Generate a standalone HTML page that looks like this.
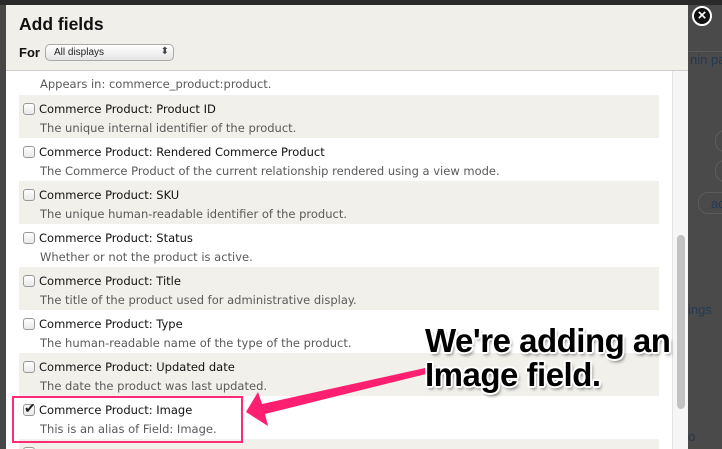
<!DOCTYPE html>
<html><head><style>
*{margin:0;padding:0;box-sizing:border-box}
body{width:722px;height:449px;overflow:hidden;background:#474747;font-family:"Liberation Sans",sans-serif;position:relative}
.top{position:absolute;left:0;top:0;width:722px;height:5px;background:#2a2a2a}
.right{position:absolute;left:688px;top:5px;width:34px;height:444px;background:#4a4a4a;color:#1a3850;font-size:13px;overflow:hidden;white-space:nowrap}
.dlg{position:absolute;left:6px;top:5px;width:682px;height:444px;background:#fff;overflow:hidden}
.hdr{position:absolute;left:0;top:0;width:682px;height:66px;background:#f0efea;border-bottom:1px solid #ccc}
.hdr h1{position:absolute;left:13px;top:9px;font-size:17.5px;font-weight:bold;color:#111}
.hdr .for{position:absolute;left:13px;top:40px;font-size:13px;font-weight:bold;color:#111}
.sel{position:absolute;left:39px;top:39px;width:129px;height:17px;border:1px solid #aaa;border-radius:5px;background:linear-gradient(#fff,#e4e4e4);font-size:10px;padding:2px 0 0 8px;color:#222}
.sel:after{content:"⬍";position:absolute;right:4px;top:1px;font-size:10px;color:#444}
.row{position:absolute;left:13px;width:640px;height:43px}
.g{background:#f1f0eb}
.t{position:absolute;left:20px;top:7px;font-family:"DejaVu Sans",sans-serif;font-size:11.5px;color:#111;white-space:nowrap}
.d{position:absolute;left:21px;top:26px;font-family:"DejaVu Sans",sans-serif;font-size:11.5px;color:#5a5a5a;white-space:nowrap}
.cb{position:absolute;left:4px;top:8px;width:12px;height:12px;border:1px solid #999;border-radius:3px;background:linear-gradient(#fff,#e8e8e8)}
.sb{position:absolute;left:666px;top:66px;width:16px;height:378px;background:#f6f6f6;border-left:1px solid #e3e3e3}
.th{position:absolute;left:4px;top:164px;width:8px;height:174px;background:#c2c2c2;border-radius:4px}
.close{position:absolute;left:692px;top:6px;width:20px;height:20px;border-radius:50%;background:#111;border:2px solid #fff;color:#fff;font-weight:bold;font-size:15px;line-height:15px;text-align:center}
.ann{position:absolute;left:425px;font-size:33px;font-weight:bold;color:#000;letter-spacing:-0.5px;text-shadow:-2px 0 #fff,2px 0 #fff,0 -2px #fff,0 2px #fff,-1.5px -1.5px #fff,1.5px 1.5px #fff,-1.5px 1.5px #fff,1.5px -1.5px #fff,2px 3px 3px rgba(0,0,0,.5);white-space:nowrap}
</style></head><body>
<div class="top"></div>
<div class="right">
<div style="position:absolute;left:0;top:46px;width:34px;height:1px;background:#5a5a5a"></div>
<div style="position:absolute;left:2px;top:47px;color:#233a50">nin pa</div>
<div style="position:absolute;left:27px;top:125px;width:20px;height:22px;border:1px solid #5c5c5c;border-radius:10px"></div>
<div style="position:absolute;left:27px;top:155px;width:20px;height:22px;border:1px solid #5c5c5c;border-radius:10px"></div>
<div style="position:absolute;left:10px;top:187px;width:40px;height:22px;border:1px solid #5c5c5c;border-radius:10px;color:#233a50;padding:3px 0 0 12px">ad</div>
<div style="position:absolute;left:0;top:297px;color:#233a50">ings</div>
<div style="position:absolute;left:0;top:424px;color:#233a50">o</div>
</div>
<div class="dlg">
<div class="hdr"><h1>Add fields</h1><div class="for">For</div><div class="sel">All displays</div></div>
<div class="row" style="top:66px;height:24px"><div class="d" style="top:6px">Appears in: commerce_product:product.</div></div>
<div class="row g" style="top:90px"><div class="cb"></div><div class="t">Commerce Product: Product ID</div><div class="d">The unique internal identifier of the product.</div></div>
<div class="row" style="top:133px"><div class="cb"></div><div class="t">Commerce Product: Rendered Commerce Product</div><div class="d">The Commerce Product of the current relationship rendered using a view mode.</div></div>
<div class="row g" style="top:176px"><div class="cb"></div><div class="t">Commerce Product: SKU</div><div class="d">The unique human-readable identifier of the product.</div></div>
<div class="row" style="top:219px"><div class="cb"></div><div class="t">Commerce Product: Status</div><div class="d">Whether or not the product is active.</div></div>
<div class="row g" style="top:262px"><div class="cb"></div><div class="t">Commerce Product: Title</div><div class="d">The title of the product used for administrative display.</div></div>
<div class="row" style="top:305px"><div class="cb"></div><div class="t">Commerce Product: Type</div><div class="d">The human-readable name of the type of the product.</div></div>
<div class="row g" style="top:348px"><div class="cb"></div><div class="t">Commerce Product: Updated date</div><div class="d">The date the product was last updated.</div></div>
<div class="row" style="top:391px"><div class="cb"></div><div style="position:absolute;left:5px;top:4px;font-size:14px;color:#222">✔</div><div class="t">Commerce Product: Image</div><div class="d">This is an alias of Field: Image.</div></div>
<div class="row g" style="top:434px;height:10px"><div class="cb"></div></div>
<div class="sb"><div class="th"></div></div>
</div>
<div class="close">×</div>
<div style="position:absolute;left:12px;top:396px;width:231px;height:47px;border:2px solid #ff2a78"></div>
<svg style="position:absolute;left:0;top:0" width="722" height="449"><path d="M425 368 L262 404 L258 392 L246 412 L268 426 L265 414 L426 374 Z" fill="#ff1f70"/></svg>
<div class="ann" style="top:322px">We're adding an</div>
<div class="ann" style="top:356px">Image field.</div>
</body></html>
